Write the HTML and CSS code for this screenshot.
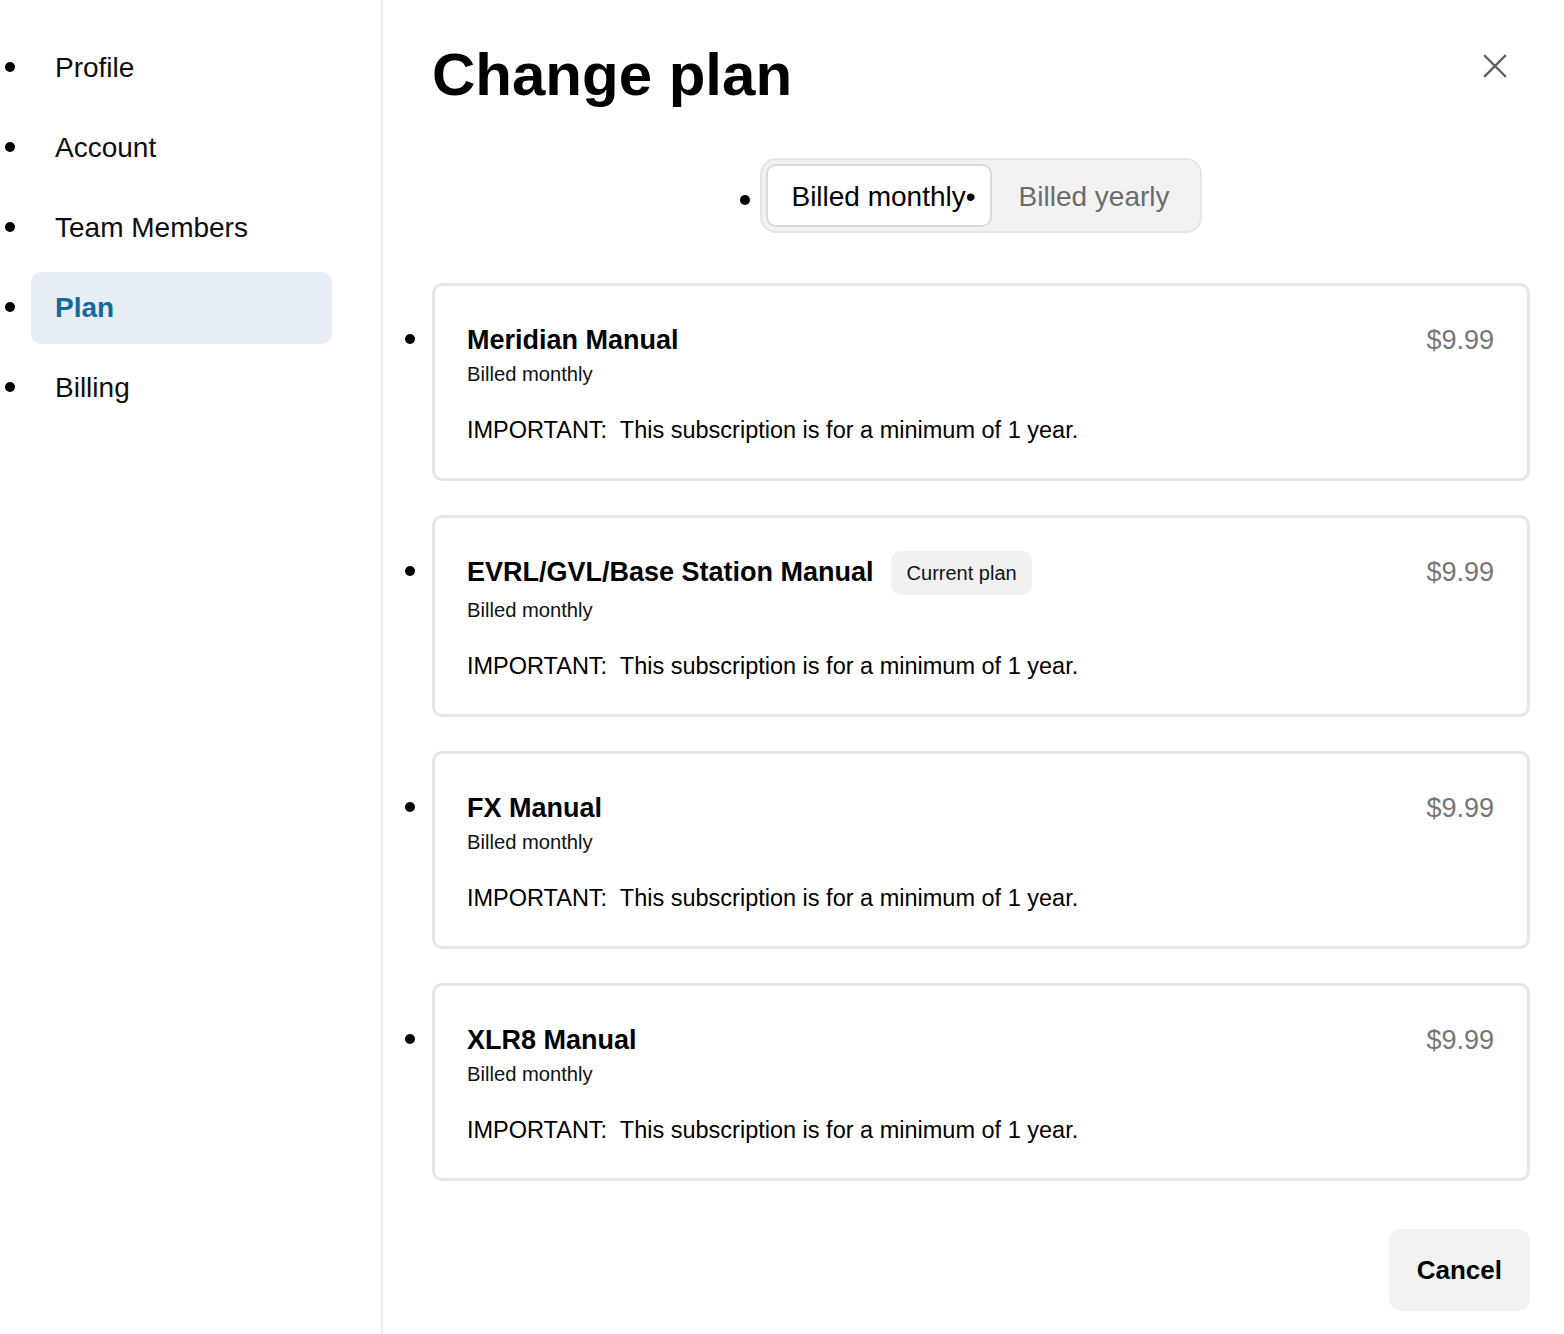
FILE: index.html
```html
<!DOCTYPE html>
<html lang="en">
<head>
<meta charset="utf-8">
<title>Change plan</title>
<link rel="stylesheet" href="styles.css">
</head>
<body>
<div class="layout">
  <aside class="sidebar">
    <ul class="nav">
      <li class="nav-item">Profile</li>
      <li class="nav-item">Account</li>
      <li class="nav-item">Team Members</li>
      <li class="nav-item active">Plan</li>
      <li class="nav-item">Billing</li>
    </ul>
  </aside>
  <main class="main">
    <div class="header">
      <h1 class="title">Change plan</h1>
      <button class="close" aria-label="Close">
        <svg width="24" height="24" viewBox="0 0 24 24" fill="none" stroke="#5f5f5f" stroke-width="2.4" stroke-linecap="square"><path d="M2 2 L22 22 M22 2 L2 22"/></svg>
      </button>
    </div>
    <ul class="toggle-list">
      <li class="toggle-item">
        <div class="toggle">
          <span class="seg seg-on">Billed monthly<span class="dot">•</span></span>
          <span class="seg seg-off">Billed yearly</span>
        </div>
      </li>
    </ul>
    <ul class="cards">
      <li class="card">
        <div class="card-row">
          <div class="card-name"><span class="name">Meridian Manual</span></div>
          <span class="price">$9.99</span>
        </div>
        <div class="sub">Billed monthly</div>
        <div class="note">IMPORTANT:&nbsp; This subscription is for a minimum of 1 year.</div>
      </li>
      <li class="card">
        <div class="card-row">
          <div class="card-name"><span class="name">EVRL/GVL/Base Station Manual</span><span class="badge">Current plan</span></div>
          <span class="price">$9.99</span>
        </div>
        <div class="sub">Billed monthly</div>
        <div class="note">IMPORTANT:&nbsp; This subscription is for a minimum of 1 year.</div>
      </li>
      <li class="card">
        <div class="card-row">
          <div class="card-name"><span class="name">FX Manual</span></div>
          <span class="price">$9.99</span>
        </div>
        <div class="sub">Billed monthly</div>
        <div class="note">IMPORTANT:&nbsp; This subscription is for a minimum of 1 year.</div>
      </li>
      <li class="card">
        <div class="card-row">
          <div class="card-name"><span class="name">XLR8 Manual</span></div>
          <span class="price">$9.99</span>
        </div>
        <div class="sub">Billed monthly</div>
        <div class="note">IMPORTANT:&nbsp; This subscription is for a minimum of 1 year.</div>
      </li>
    </ul>
    <div class="footer">
      <button class="cancel">Cancel</button>
    </div>
  </main>
</div>
</body>
</html>
```
FILE: styles.css
```css
* { box-sizing: border-box; }
html, body { margin: 0; padding: 0; }
body {
  font-family: "Liberation Sans", Arial, sans-serif;
  color: #0d0d0d;
  background: #fff;
}
.layout {
  display: flex;
  min-height: 100vh;
}
.sidebar {
  width: 383px;
  flex: 0 0 383px;
  border-right: 2px solid #ececec;
}
.nav {
  margin: 0;
  padding: 32px 49px 0 31px;
}
.nav-item {
  font-size: 28px;
  line-height: 72px;
  padding: 0 24px;
  margin-bottom: 8px;
  border-radius: 10px;
  list-style-image: url("data:image/svg+xml,%3Csvg xmlns='http://www.w3.org/2000/svg' width='19' height='15'%3E%3Ccircle cx='5' cy='5' r='5' fill='black'/%3E%3C/svg%3E");
}
.toggle-item {
  list-style-image: url("data:image/svg+xml,%3Csvg xmlns='http://www.w3.org/2000/svg' width='13' height='11'%3E%3Ccircle cx='5' cy='5' r='5' fill='black'/%3E%3C/svg%3E");
}
.card {
  list-style-image: url("data:image/svg+xml,%3Csvg xmlns='http://www.w3.org/2000/svg' width='20' height='15'%3E%3Ccircle cx='5' cy='5' r='5' fill='black'/%3E%3C/svg%3E");
}
.nav-item.active {
  background: #e8eef6;
  color: #17679d;
  font-weight: 700;
}
.main {
  flex: 1;
  padding: 40px 34px 24px 49px;
}
.header {
  display: flex;
  justify-content: space-between;
  align-items: flex-start;
}
.title {
  margin: 0;
  font-size: 60px;
  line-height: 69px;
  font-weight: 700;
  color: #000;
}
.close {
  margin: 14px 23px 0 0;
  padding: 0;
  border: 0;
  background: none;
  width: 24px;
  height: 24px;
  display: block;
}
.close svg { display: block; }
.toggle-list {
  margin: 49px 0 0;
  padding: 0;
}
.toggle-item {
  width: fit-content;
  margin: 0 auto;
  font-size: 28px;
}
.toggle {
  display: flex;
  padding: 4px;
  border: 2px solid #e5e5e5;
  background: #f2f2f2;
  border-radius: 16px;
}
.seg {
  display: block;
  line-height: 57px;
  padding-top: 2px;
  border: 2px solid transparent;
  border-radius: 10px;
  white-space: nowrap;
}
.seg-on {
  background: #fff;
  border-color: #dadada;
  color: #000;
  padding-left: 23px;
  padding-right: 14px;
}
.seg-off {
  color: #6b6b6b;
  padding-left: 25px;
  padding-right: 24px;
}
.cards {
  margin: 50px 0 0;
  padding: 0;
}
.card {
  font-size: 27px;
  border: 3px solid #e6e6e6;
  border-radius: 10px;
  padding: 32px 33px 34px 32px;
  margin-bottom: 34px;
}
.card-row {
  display: flex;
  justify-content: space-between;
  align-items: flex-start;
  min-height: 44px;
}
.card-name {
  display: flex;
  align-items: flex-start;
}
.name {
  font-size: 27px;
  line-height: 44px;
  font-weight: 700;
  color: #000;
}
.badge {
  margin: 1px 0 3px 17px;
  font-size: 20px;
  line-height: 44px;
  padding: 0 15px 0 16px;
  background: #f1f1f1;
  border-radius: 10px;
  color: #111;
}
.price {
  font-size: 27px;
  line-height: 44px;
  color: #767676;
}
.sub {
  font-size: 20.2px;
  line-height: 24px;
  color: #111;
}
.note {
  margin-top: 30px;
  font-size: 23.5px;
  line-height: 28px;
  color: #000;
}
.footer {
  display: flex;
  justify-content: flex-end;
  margin-top: 48px;
}
.cancel {
  font-family: "Liberation Sans", Arial, sans-serif;
  font-size: 26px;
  font-weight: 700;
  color: #000;
  background: #f2f2f2;
  border: 0;
  border-radius: 12px;
  height: 82px;
  padding: 0 28px;
}
```
